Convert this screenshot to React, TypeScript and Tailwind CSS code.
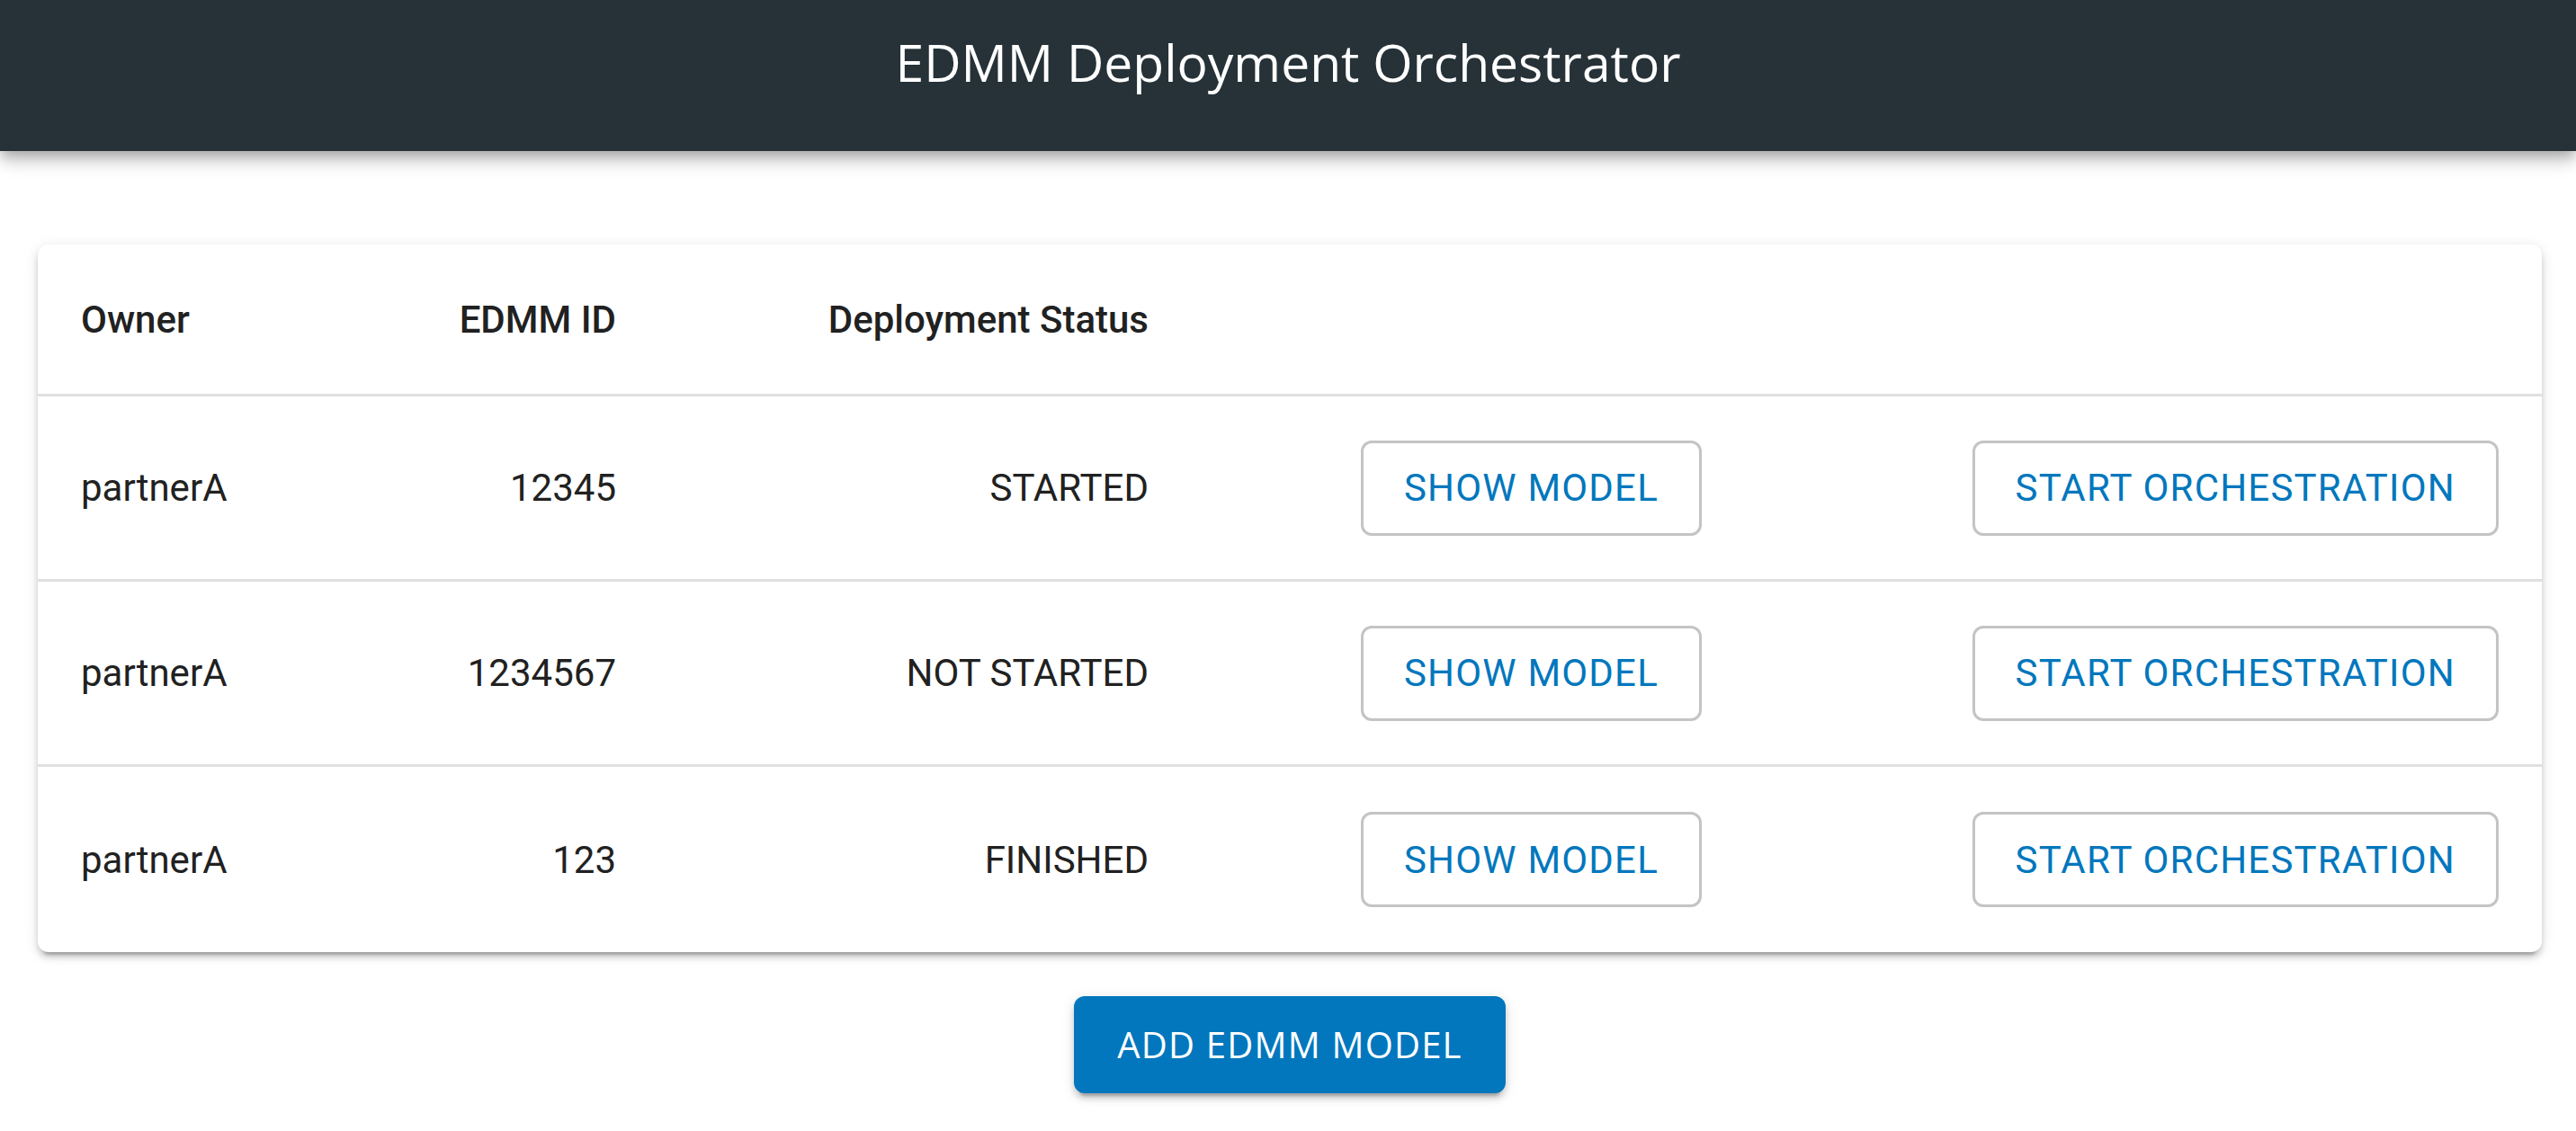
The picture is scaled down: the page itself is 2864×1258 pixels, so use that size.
const rows = [
  { owner: 'partnerA', id: '12345', status: 'STARTED' },
  { owner: 'partnerA', id: '1234567', status: 'NOT STARTED' },
  { owner: 'partnerA', id: '123', status: 'FINISHED' },
]

const cols = 'grid grid-cols-[400px_291px_592px_615px_886px] items-center'

function OutlinedButton({ children }: { children: React.ReactNode }) {
  return (
    <button
      className="h-[106px] px-[45px] rounded-[12px] border-[3px] border-[#c4c4c4] bg-white text-[#0277bd] text-[42px] font-normal uppercase tracking-[1.2px] whitespace-nowrap"
      style={{ fontFamily: 'Roboto, "Liberation Sans", sans-serif' }}
    >
      {children}
    </button>
  )
}

export default function App() {
  return (
    <div className="min-h-screen bg-white" style={{ fontFamily: 'Roboto, "Liberation Sans", sans-serif' }}>

      {/* App bar */}
      <header className="relative z-10 h-[168px] bg-[#263238] flex justify-center pt-[30px] shadow-[0_6px_12px_-3px_rgba(0,0,0,0.2),0_12px_15px_0_rgba(0,0,0,0.14),0_3px_30px_0_rgba(0,0,0,0.12)]">
        <h1
          className="text-white text-[57px] font-normal leading-[78px]"
          style={{ fontFamily: '"Open Sans", "Noto Sans", sans-serif' }}
        >
          EDMM Deployment Orchestrator
        </h1>
      </header>

      <main className="pt-[104px] pl-[42px]">
        {/* Table card */}
        <div className="w-[2784px] bg-white rounded-[12px] shadow-[0_9px_3px_-6px_rgba(0,0,0,0.2),0_6px_6px_0_rgba(0,0,0,0.14),0_3px_15px_0_rgba(0,0,0,0.12)]">
          <div className={`${cols} h-[169px] border-b-[3px] border-[#e0e0e0] text-[42px] font-medium text-[#212121]`}>
            <div className="pl-[48px]">Owner</div>
            <div className="text-right pr-[48px]">EDMM ID</div>
            <div className="text-right pr-[48px]">Deployment Status</div>
            <div />
            <div />
          </div>

          {rows.map((r, i) => (
            <div
              key={r.id}
              className={`${cols} h-[206px] text-[42px] text-[#212121] ${i < rows.length - 1 ? 'border-b-[3px] border-[#e0e0e0]' : ''}`}
            >
              <div className="pl-[48px]">{r.owner}</div>
              <div className="text-right pr-[48px]">{r.id}</div>
              <div className="text-right pr-[48px]">{r.status}</div>
              <div className="flex justify-end pr-[48px]">
                <OutlinedButton>Show Model</OutlinedButton>
              </div>
              <div className="flex justify-end pr-[48px]">
                <OutlinedButton>Start Orchestration</OutlinedButton>
              </div>
            </div>
          ))}
        </div>

        <div className="w-[2784px] flex justify-center pt-[49px]">
          <button
            className="h-[108px] px-[48px] rounded-[12px] bg-[#0277bd] text-white text-[40px] font-normal uppercase tracking-[1.2px] shadow-[0_9px_3px_-6px_rgba(0,0,0,0.2),0_6px_6px_0_rgba(0,0,0,0.14),0_3px_15px_0_rgba(0,0,0,0.12)]"
            style={{ fontFamily: '"Open Sans", "Noto Sans", sans-serif' }}
          >
            Add EDMM Model
          </button>
        </div>
      </main>
    </div>
  )
}
